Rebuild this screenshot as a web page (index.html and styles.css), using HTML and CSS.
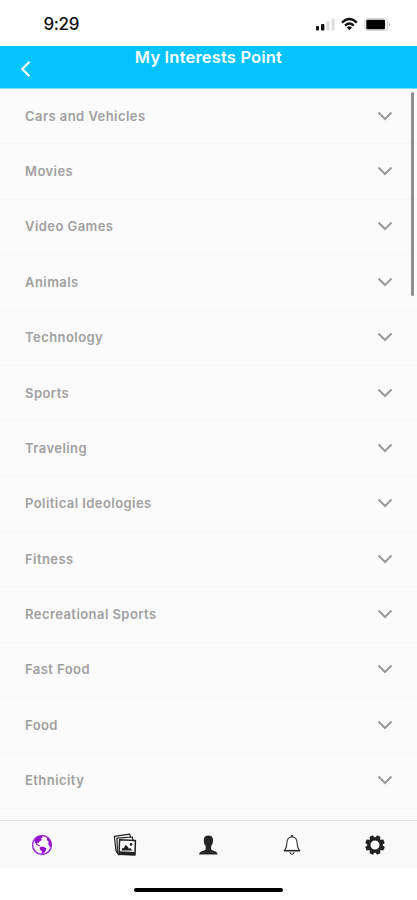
FILE: index.html
```
<!DOCTYPE html>
<html lang="en">
<head>
<meta charset="utf-8">
<title>My Interests Point</title>
<link rel="stylesheet" href="styles.css">
</head>
<body>
<div class="status">
  <span class="time">9:29</span>
  <svg class="signals" width="76" height="16" viewBox="0 0 76 16">
    <rect x="1" y="10" width="3" height="4.5" rx="1" fill="#111"/>
    <rect x="6" y="8" width="3.4" height="6.5" rx="1" fill="#111"/>
    <rect x="11.4" y="5" width="3" height="9.5" rx="1" fill="#ddd"/>
    <rect x="16.6" y="2.5" width="3" height="12" rx="1" fill="#ddd"/>
    <g fill="none" stroke="#111" stroke-width="2.2">
      <path d="M27 6.6Q34.4-.6 41.8 6.6"/>
      <path d="M30 9.6Q34.4 5.4 38.8 9.6"/>
    </g>
    <path d="M31.8 11.4Q34.4 9.2 37 11.4L34.4 14.2Z" fill="#111"/>
    <rect x="50" y="2.6" width="22.5" height="11.8" rx="3" fill="#fff" stroke="#ccc"/>
    <rect x="51.3" y="3.7" width="18.8" height="9.6" rx="1.2" fill="#000"/>
    <path d="M74 6.2Q76.5 8.5 74 10.8Z" fill="#bbb"/>
  </svg>
</div>
<header class="header">
  <svg class="back" width="14" height="18" viewBox="0 0 14 18"><path d="M10.5 1.8L3.3 9L10.5 16.2"/></svg>
  <h1>My Interests Point</h1>
</header>
<main class="list">
  <div class="row"><span>Cars and Vehicles</span><svg class="chev" viewBox="0 0 16 10"><path d="M1.5 1.5L8 8L14.5 1.5"/></svg></div>
  <div class="row"><span>Movies</span><svg class="chev" viewBox="0 0 16 10"><path d="M1.5 1.5L8 8L14.5 1.5"/></svg></div>
  <div class="row"><span>Video Games</span><svg class="chev" viewBox="0 0 16 10"><path d="M1.5 1.5L8 8L14.5 1.5"/></svg></div>
  <div class="row"><span>Animals</span><svg class="chev" viewBox="0 0 16 10"><path d="M1.5 1.5L8 8L14.5 1.5"/></svg></div>
  <div class="row"><span>Technology</span><svg class="chev" viewBox="0 0 16 10"><path d="M1.5 1.5L8 8L14.5 1.5"/></svg></div>
  <div class="row"><span>Sports</span><svg class="chev" viewBox="0 0 16 10"><path d="M1.5 1.5L8 8L14.5 1.5"/></svg></div>
  <div class="row"><span>Traveling</span><svg class="chev" viewBox="0 0 16 10"><path d="M1.5 1.5L8 8L14.5 1.5"/></svg></div>
  <div class="row"><span>Political Ideologies</span><svg class="chev" viewBox="0 0 16 10"><path d="M1.5 1.5L8 8L14.5 1.5"/></svg></div>
  <div class="row"><span>Fitness</span><svg class="chev" viewBox="0 0 16 10"><path d="M1.5 1.5L8 8L14.5 1.5"/></svg></div>
  <div class="row"><span>Recreational Sports</span><svg class="chev" viewBox="0 0 16 10"><path d="M1.5 1.5L8 8L14.5 1.5"/></svg></div>
  <div class="row"><span>Fast Food</span><svg class="chev" viewBox="0 0 16 10"><path d="M1.5 1.5L8 8L14.5 1.5"/></svg></div>
  <div class="row"><span>Food</span><svg class="chev" viewBox="0 0 16 10"><path d="M1.5 1.5L8 8L14.5 1.5"/></svg></div>
  <div class="row"><span>Ethnicity</span><svg class="chev" viewBox="0 0 16 10"><path d="M1.5 1.5L8 8L14.5 1.5"/></svg></div>
  <div class="scrollbar"></div>
</main>
<nav class="tabs">
  <div class="tab"><svg width="24" height="24" viewBox="0 0 24 24">
    <circle cx="12" cy="12" r="9.4" fill="#fff" stroke="#9a2fd0" stroke-width="1.5"/>
    <path fill="#9412cc" d="M5.4 5.6Q8 2.8 12 2.8L12.6 4.4L11 5.6L12 7L9.6 8.4L8.8 10L6.6 9.6L7.8 11.6L10.4 12.6L9.6 13.4L6.4 11.8L4.6 9Z"/>
    <path fill="#9412cc" d="M9.8 14L13 13.4L16.6 15.2L15.8 17.8L13.6 20.6L11.4 21L12 18.2L9.8 16.4Z"/>
    <path fill="#9412cc" d="M17.4 4.8Q21.4 7.8 21.4 12L20 14.4L18.4 11.6L18.6 8.8L16.8 7Z"/>
  </svg></div>
  <div class="tab"><svg width="24" height="24" viewBox="0 0 24 24">
    <g fill="#fafafa" stroke="#222" stroke-linejoin="round">
      <path stroke-width="1.2" d="M1.4 3.4L16.8 1.2L17.6 5L5 20.2L3 18.2Z"/>
      <path stroke-width="1.2" d="M4 5.2L19.4 4L20 8L6 21.8L4.4 20Z"/>
      <path stroke-width="1.5" d="M6.6 6.8L22.4 7.4L22 22L6 21.2Z"/>
    </g>
    <path fill="#222" d="M6 18.2L22 19V22L6 21.2ZM8.6 17.4L9.4 15L11 15L12.6 11.8L15 14L16 16L17 14.8L19.4 17.6Z"/>
    <circle cx="18" cy="11.4" r="1.3" fill="#222"/>
  </svg></div>
  <div class="tab"><svg width="24" height="24" viewBox="0 0 24 24">
    <path fill="#252525" d="M12.4 2.4C15.6 2.4 17.2 4.2 17 7.2C17 9.4 16.6 11 15.4 12.6C15 14 15 15.2 15.2 16.6C16.8 18.2 21 17.8 21.6 21.4H3C3.6 17.8 8 18.2 9.6 16.6C9.8 15.2 9.8 14 9.4 12.6C8.2 11 7.8 9.4 7.8 7.2C7.6 4.2 9.2 2.4 12.4 2.4Z"/>
  </svg></div>
  <div class="tab"><svg width="24" height="24" viewBox="0 0 24 24">
    <path fill="#fff" stroke="#333" stroke-width="1.1" stroke-linejoin="round" d="M4.2 17.6C6.4 15.8 6.7 13.4 6.9 9.8C7.1 6.2 8.8 4 12 4C15.2 4 16.9 6.2 17.1 9.8C17.3 13.4 17.6 15.8 19.8 17.6Z"/>
    <path d="M10.4 3.8Q10.4 2 12 2Q13.6 2 13.6 3.8Z" fill="#222"/>
    <path d="M4 17.6H20" stroke="#222" stroke-width="1.4"/>
    <path d="M9.8 19.2Q10.2 21.2 12 21.2Q13.8 21.2 14.2 19.2" fill="none" stroke="#333" stroke-width="1.1"/>
  </svg></div>
  <div class="tab"><svg width="24" height="24" viewBox="0 0 24 24">
    <circle cx="12" cy="12" r="6.1" fill="none" stroke="#222" stroke-width="3.2"/>
    <g fill="#222" transform="rotate(22.5 12 12)">
      <path d="M9.4 5.4L10.2 2.2H13.8L14.6 5.4Z"/>
      <path d="M9.4 5.4L10.2 2.2H13.8L14.6 5.4Z" transform="rotate(45 12 12)"/>
      <path d="M9.4 5.4L10.2 2.2H13.8L14.6 5.4Z" transform="rotate(90 12 12)"/>
      <path d="M9.4 5.4L10.2 2.2H13.8L14.6 5.4Z" transform="rotate(135 12 12)"/>
      <path d="M9.4 5.4L10.2 2.2H13.8L14.6 5.4Z" transform="rotate(180 12 12)"/>
      <path d="M9.4 5.4L10.2 2.2H13.8L14.6 5.4Z" transform="rotate(225 12 12)"/>
      <path d="M9.4 5.4L10.2 2.2H13.8L14.6 5.4Z" transform="rotate(270 12 12)"/>
      <path d="M9.4 5.4L10.2 2.2H13.8L14.6 5.4Z" transform="rotate(315 12 12)"/>
    </g>
  </svg></div>
</nav>
<footer class="home"><div class="bar"></div></footer>
</body>
</html>
```
FILE: styles.css
```
* { box-sizing: border-box; }
body {
  margin: 0;
  width: 417px;
  height: 900px;
  display: flex;
  flex-direction: column;
  overflow: hidden;
  background: #fff;
  font-family: Inter, "Liberation Sans", sans-serif;
}
.status {
  height: 46px;
  flex: none;
  display: flex;
  justify-content: space-between;
  padding: 14px 26px 0 43.5px;
}
.time {
  font-size: 17px;
  line-height: 20px;
  font-weight: 500;
  letter-spacing: -0.4px;
  color: #111;
}
.signals { margin-top: 2px; }
.header {
  height: 43px;
  flex: none;
  display: grid;
  grid-template-columns: 50px 1fr 50px;
  background: #04c4ff;
  border-bottom: 1px solid #7cdfff;
}
.back {
  margin: 14px 0 0 19px;
  fill: none;
  stroke: #fff;
  stroke-width: 2.2;
}
h1 {
  margin: 1px 0 0;
  font-size: 16.5px;
  line-height: 20px;
  font-weight: 600;
  letter-spacing: 0.18px;
  text-align: center;
  white-space: nowrap;
  color: #fff;
}
.list {
  position: relative;
  height: 731px;
  flex: none;
  overflow: hidden;
  background: #fbfbfb;
}
.row {
  height: 55.38px;
  display: flex;
  align-items: center;
  justify-content: space-between;
  padding: 0 24.5px 1px 25px;
  border-bottom: 1px solid #f6f6f6;
  font-size: 13px;
  font-weight: 600;
  letter-spacing: 0.44px;
  color: #a0a0a0;
}
.chev {
  width: 16px;
  height: 10px;
  fill: none;
  stroke: #999;
  stroke-width: 2;
}
.scrollbar {
  position: absolute;
  top: 3px;
  right: 3px;
  width: 3px;
  height: 204px;
  border-radius: 2px;
  background: #8e8e8e;
}
.tabs {
  height: 48px;
  flex: none;
  display: grid;
  grid-template-columns: repeat(5, 1fr);
  background: #f9f9f9;
  border-top: 1px solid #e0e0e0;
}
.tab {
  display: flex;
  align-items: center;
  justify-content: center;
}
.home {
  flex: 1;
  display: flex;
  justify-content: center;
  padding-top: 20px;
}
.bar {
  width: 149px;
  height: 4px;
  border-radius: 2px;
  background: #000;
}
```
